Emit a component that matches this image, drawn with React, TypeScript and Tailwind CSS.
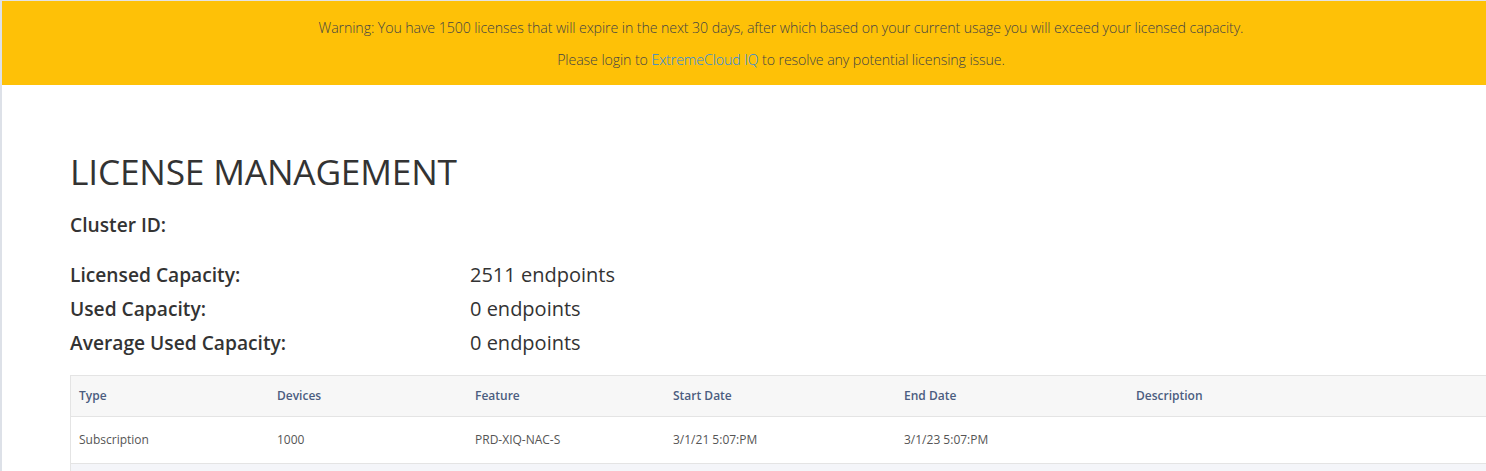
const rows = [
  {
    type: "Subscription",
    devices: "1000",
    feature: "PRD-XIQ-NAC-S",
    start: "3/1/21 5:07:PM",
    end: "3/1/23 5:07:PM",
    description: "",
  },
];

const stats = [
  { label: "Licensed Capacity:", value: "2511 endpoints" },
  { label: "Used Capacity:", value: "0 endpoints" },
  { label: "Average Used Capacity:", value: "0 endpoints" },
];

export default function App() {
  return (
    <div
      className="h-[471px] w-full overflow-hidden border-t border-[#e3e3e3] border-l-2 border-l-[#dde1e8] bg-white"
      style={{ fontFamily: '"Open Sans", "Liberation Sans", sans-serif' }}
    >
      {/* page is wider than the window, the right part is cut off */}
      <div className="w-[1558px]">
        {/* Licensing warning banner */}
        <div className="flex h-[84px] flex-col items-center bg-[#fec107] pt-[17px] text-[14.2px] font-light tracking-[-0.1px] text-[#444]">
          <p className="leading-[20px]">
            Warning: You have 1500 licenses that will expire in the next 30 days, after which based on your current usage you will exceed your licensed capacity.
          </p>
          <p className="mt-[12px] leading-[20px]">
            Please login to <a className="text-[#1e88e5]">ExtremeCloud IQ</a> to resolve any potential licensing issue.
          </p>
        </div>

        <div className="pl-[68px] pt-[64px]">
          <h1 className="text-[35.3px] font-normal leading-[44px] tracking-[-0.2px] text-[#333]">
            LICENSE MANAGEMENT
          </h1>

          <div className="mt-[20px] text-[19.2px] font-semibold leading-[24px] text-[#333]">Cluster ID:</div>

          <div className="mt-[21px] flex flex-col">
            {stats.map((s) => (
              <div key={s.label} className="flex h-[34px] items-center text-[#333]">
                <span className="w-[400px] text-[19.2px] font-semibold">{s.label}</span>
                <span className="text-[20px]">{s.value}</span>
              </div>
            ))}
          </div>

          {/* License table */}
          <div className="mt-[15px] border-l border-[#e4e4e4]">
            <div className="flex h-[42px] items-center border-y border-[#e4e4e4] bg-[#f7f7f7] text-[12px] font-semibold text-[#4b5d80]">
              <div className="w-[198px] pl-[8px]">Type</div>
              <div className="w-[198px] pl-[8px]">Devices</div>
              <div className="w-[198px] pl-[8px]">Feature</div>
              <div className="w-[231px] pl-[8px]">Start Date</div>
              <div className="w-[232px] pl-[8px]">End Date</div>
              <div className="flex-1 pl-[8px]">Description</div>
            </div>
            {rows.map((r) => (
              <div key={r.feature} className="flex h-[47px] items-center border-b border-[#e4e4e4] text-[12px] text-[#555]">
                <div className="w-[198px] pl-[8px]">{r.type}</div>
                <div className="w-[198px] pl-[8px]">{r.devices}</div>
                <div className="w-[198px] pl-[8px]">{r.feature}</div>
                <div className="w-[231px] pl-[8px]">{r.start}</div>
                <div className="w-[232px] pl-[8px]">{r.end}</div>
                <div className="flex-1 pl-[8px]">{r.description}</div>
              </div>
            ))}
            <div className="h-[40px] bg-[#f4f5f9]" />
          </div>
        </div>
      </div>
    </div>
  );
}
